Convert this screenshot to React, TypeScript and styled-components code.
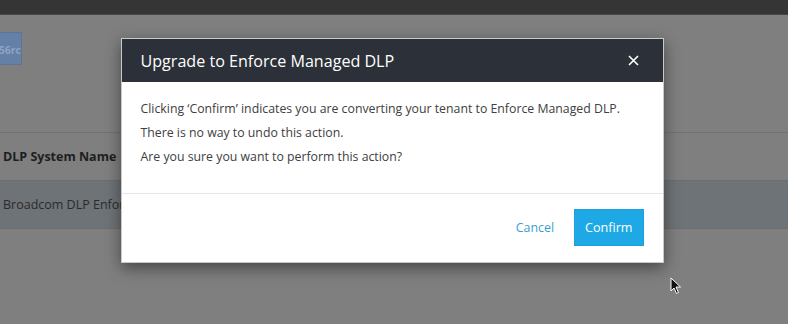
import styled, { createGlobalStyle } from 'styled-components'

const GlobalStyle = createGlobalStyle`
  html,
  body {
    margin: 0;
    padding: 0;
    background: #7f7f7f;
    font-family: 'Open Sans', 'Noto Sans', sans-serif;
  }
`

const StyledPage = styled.div`
  position: relative;
  width: 788px;
  height: 324px;
  overflow: hidden;
  background: #7f7f7f;
`

const StyledTopBar = styled.div`
  display: flex;
  justify-content: flex-end;
  align-items: flex-end;
  gap: 48px;
  height: 14px;
  background: #353535;
  border-bottom: 1px solid #474747;
  overflow: hidden;
`

const StyledNavItem = styled.span`
  font-size: 12px;
  line-height: 14px;
  margin-bottom: 12px;
  color: #6d6d6d;
  white-space: nowrap;
`

const StyledContent = styled.div`
  display: flex;
  flex-direction: column;
  padding-top: 17px;
`

const StyledVersionTag = styled.div`
  display: flex;
  justify-content: flex-end;
  align-items: center;
  width: 22px;
  height: 33px;
  padding-top: 2px;
  box-sizing: border-box;
  background: #6580a6;
  border: 1px solid #5d7496;
  border-left: none;
  overflow: hidden;
  font-size: 10.5px;
  font-weight: 700;
  color: #8fa3c2;
  white-space: nowrap;
`

const StyledTable = styled.div`
  margin-top: 67px;
  display: flex;
  flex-direction: column;
  border-top: 1px solid #727272;
`

const StyledRow = styled.div<{ $highlight?: boolean; $header?: boolean }>`
  display: flex;
  align-items: center;
  justify-content: space-between;
  height: 47px;
  padding: 0 0 0 3px;
  background: ${({ $highlight }) => ($highlight ? '#6e7377' : 'transparent')};
  border-bottom: 1px solid #6d6d6d;
  font-size: 12.5px;
  font-weight: ${({ $header }) => ($header ? 700 : 400)};
  color: ${({ $header }) => ($header ? '#1e1e1e' : '#2b2b2b')};
  white-space: nowrap;
`

const StyledFadedCell = styled.span`
  color: #75797c;
  font-size: 11px;
  margin-right: 8px;
`

const StyledBackdrop = styled.div`
  position: absolute;
  inset: 0;
  display: flex;
  justify-content: center;
  align-items: flex-start;
  padding: 38px 4px 0 0;
`

const StyledModal = styled.div`
  width: 541px;
  background: #ffffff;
  border: 1px solid #c9c9c9;
  box-shadow: 0 5px 15px rgba(0, 0, 0, 0.45);
  display: flex;
  flex-direction: column;
`

const StyledHeader = styled.div`
  display: flex;
  align-items: center;
  justify-content: space-between;
  height: 43px;
  padding: 0 20px 0 19px;
  background: #2c3038;
`

const StyledTitle = styled.h4`
  margin: 0;
  font-size: 16.1px;
  font-weight: 400;
  color: #ffffff;
`

const StyledClose = styled.button`
  display: flex;
  align-items: center;
  justify-content: center;
  width: 16px;
  height: 16px;
  padding: 0;
  margin-right: 1px;
  background: none;
  border: none;
`

const StyledBody = styled.div`
  display: flex;
  flex-direction: column;
  gap: 4px;
  padding: 17px 19px 26px;
  border-bottom: 1px solid #e5e5e5;

  p {
    margin: 0;
    font-size: 12.3px;
    line-height: 20px;
    color: #404040;
  }
`

const StyledFooter = styled.div`
  display: flex;
  justify-content: flex-end;
  align-items: center;
  gap: 20px;
  padding: 15px 19px 16px 20px;
`

const StyledLinkButton = styled.button`
  padding: 0;
  background: none;
  border: none;
  font-family: inherit;
  font-size: 12.4px;
  color: #3aa0cf;
`

const StyledPrimaryButton = styled.button`
  height: 37px;
  padding: 0 10px;
  background: #1ea8e5;
  border: 1px solid #1da0db;
  font-family: inherit;
  font-size: 12.6px;
  color: #ffffff;
`

const StyledCursor = styled.svg`
  position: absolute;
  left: 670px;
  top: 277px;
`

export default function App() {
  return (
    <StyledPage>
      <GlobalStyle />
      <StyledTopBar>
        <StyledNavItem>Users</StyledNavItem>
        <StyledNavItem>Notifications</StyledNavItem>
      </StyledTopBar>
      <StyledContent>
        <StyledVersionTag>v156rc</StyledVersionTag>
        <StyledTable>
          <StyledRow $header>DLP System Name</StyledRow>
          <StyledRow $highlight>
            Broadcom DLP Enforce Server
            <StyledFadedCell>· · · · · · · · · · · · · · · · · · ·</StyledFadedCell>
          </StyledRow>
        </StyledTable>
      </StyledContent>
      <StyledBackdrop>
        <StyledModal>
          <StyledHeader>
            <StyledTitle>Upgrade to Enforce Managed DLP</StyledTitle>
            <StyledClose aria-label="Close">
              <svg width="11" height="11" viewBox="0 0 11 11">
                <path d="M1 1 L10 10 M10 1 L1 10" stroke="#ffffff" strokeWidth="1.6" />
              </svg>
            </StyledClose>
          </StyledHeader>
          <StyledBody>
            <p>Clicking ‘Confirm’ indicates you are converting your tenant to Enforce Managed DLP.</p>
            <p>There is no way to undo this action.</p>
            <p>Are you sure you want to perform this action?</p>
          </StyledBody>
          <StyledFooter>
            <StyledLinkButton>Cancel</StyledLinkButton>
            <StyledPrimaryButton>Confirm</StyledPrimaryButton>
          </StyledFooter>
        </StyledModal>
      </StyledBackdrop>
      <StyledCursor width="12" height="18" viewBox="0 0 12 18">
        <path d="M1 1 L1 14 L4 11 L6.5 16.5 L8.5 15.5 L6 10 L10.5 10 Z" fill="#111" stroke="#fff" strokeWidth="1" />
      </StyledCursor>
    </StyledPage>
  )
}
